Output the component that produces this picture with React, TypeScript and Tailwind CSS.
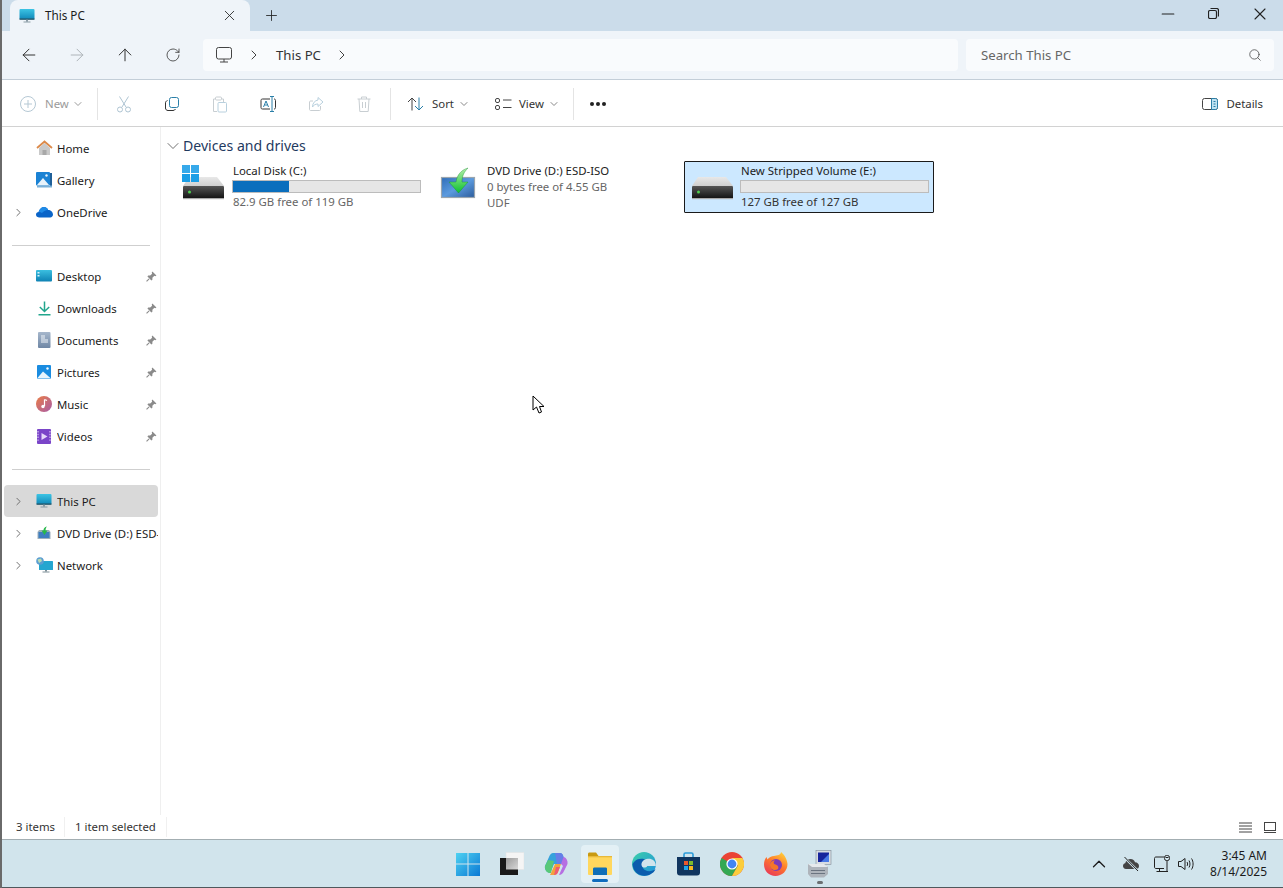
import {
  ArrowLeft,
  ArrowRight,
  ArrowUp,
  ChevronDown,
  ChevronRight,
  ChevronUp,
  Minus,
  Plus,
  RotateCw,
  Search,
  X,
} from "lucide-react";

function PcIcon({ size = 16 }: { size?: number }) {
  return (
    <svg width={size} height={size} viewBox="0 0 16 16">
      <defs>
        <linearGradient id="pcg" x1="0" y1="0" x2="0" y2="1">
          <stop offset="0" stopColor="#3cc4e4" />
          <stop offset="1" stopColor="#0f87b8" />
        </linearGradient>
      </defs>
      <rect x="0.5" y="1" width="15" height="10.5" rx="1" fill="url(#pcg)" />
      <rect x="0.5" y="10.5" width="15" height="1.2" fill="#27505f" />
      <rect x="7" y="11.7" width="2" height="2" fill="#8a9ba5" />
      <rect x="4.5" y="13.5" width="7" height="1" fill="#8a9ba5" />
    </svg>
  );
}

function HomeIcon() {
  return (
    <svg width="17" height="16" viewBox="0 0 17 16">
      <path d="M3 8 L8.5 3 L14 8 V15 H3 Z" fill="#c9c9c9" />
      <rect x="6.5" y="10" width="4" height="5" fill="#a8a8a8" />
      <path d="M1 8 L8.5 1.5 L16 8" fill="none" stroke="#dc8a4a" strokeWidth="1.8" />
    </svg>
  );
}

function GalleryIcon() {
  return (
    <svg width="16" height="16" viewBox="0 0 16 16">
      <rect x="0" y="0" width="14" height="13.5" rx="1" fill="#1a82d4" />
      <rect x="14" y="1" width="2" height="14" fill="#1f5f98" />
      <rect x="1" y="13.5" width="15" height="2" fill="#7ab0d8" />
      <path d="M1 13 L7 6 L13 13 Z" fill="#e8f3fb" />
      <circle cx="10.5" cy="3.5" r="1.2" fill="#e8f3fb" />
    </svg>
  );
}

function CloudIcon() {
  return (
    <svg width="17" height="12" viewBox="0 0 17 12">
      <path d="M3 11.5 C0.8 11.5 0 9.8 0 8.6 C0 7 1.2 6 2.6 6 C3.4 3 5.5 1 8 1 C10.2 1 11.5 2.4 12.2 4 C14.6 4 17 6 17 8.6 C17 10.3 15.8 11.5 14.2 11.5 Z" fill="#0a64c8" />
      <path d="M2.6 6 C3.4 3 5.5 1 8 1 C10.2 1 11.5 2.4 12.2 4 C9.6 4 7 5.5 6 7 C5 6.2 3.8 5.9 2.6 6 Z" fill="#1f8ae6" />
    </svg>
  );
}

function DesktopIcon() {
  return (
    <svg width="16" height="12" viewBox="0 0 16 12">
      <defs>
        <linearGradient id="dtg" x1="0" y1="0" x2="0" y2="1">
          <stop offset="0" stopColor="#3bbfe0" />
          <stop offset="1" stopColor="#0e82b4" />
        </linearGradient>
      </defs>
      <rect width="16" height="11.5" rx="1" fill="url(#dtg)" />
      <rect x="1.5" y="2" width="2" height="1.5" fill="#d8f2fa" />
      <rect x="1.5" y="5" width="2" height="1.5" fill="#d8f2fa" />
    </svg>
  );
}

function DownloadIcon() {
  return (
    <svg width="13" height="15" viewBox="0 0 13 15">
      <path d="M6.5 0.5 V10 M1.8 6 L6.5 10.5 L11.2 6" fill="none" stroke="#22a68d" strokeWidth="1.5" />
      <rect x="0.5" y="13" width="12" height="1.5" fill="#22a68d" />
    </svg>
  );
}

function DocumentIcon() {
  return (
    <svg width="13" height="16" viewBox="0 0 13 16">
      <defs>
        <linearGradient id="docg" x1="0" y1="0" x2="0" y2="1">
          <stop offset="0" stopColor="#a6b7cc" />
          <stop offset="1" stopColor="#6f87a5" />
        </linearGradient>
      </defs>
      <rect width="12.5" height="16" rx="1" fill="url(#docg)" />
      <path d="M3 4 H7 M3 6 H7 M3 8 H10 M3 10 H10" stroke="#f1f5f9" strokeWidth="1" />
    </svg>
  );
}

function PicturesIcon() {
  return (
    <svg width="14" height="14" viewBox="0 0 14 14">
      <rect width="14" height="14" rx="1" fill="#1a8ce0" />
      <path d="M0 13.5 L6 6.5 L14 13.5 Z" fill="#e8f4fc" />
      <circle cx="10.5" cy="3.5" r="1.2" fill="#f4fbff" />
    </svg>
  );
}

function MusicIcon() {
  return (
    <svg width="16" height="16" viewBox="0 0 16 16">
      <defs>
        <linearGradient id="musg" x1="0" y1="0" x2="1" y2="1">
          <stop offset="0" stopColor="#ea7d45" />
          <stop offset="1" stopColor="#a85ca8" />
        </linearGradient>
      </defs>
      <circle cx="8" cy="8" r="8" fill="url(#musg)" />
      <path d="M8.5 3.5 V10 M8.5 3.5 L11 4.5" stroke="#fff" strokeWidth="1.2" fill="none" />
      <circle cx="7" cy="10.5" r="1.7" fill="#fff" />
    </svg>
  );
}

function VideosIcon() {
  return (
    <svg width="14" height="15" viewBox="0 0 14 15">
      <rect width="14" height="15" rx="1" fill="#7a45c8" />
      <path d="M4.5 4 L10.5 7.5 L4.5 11 Z" fill="#e6d8fa" />
      <path d="M1 2 V13 M13 2 V13" stroke="#d7c3f5" strokeWidth="1.2" strokeDasharray="1.4 1.4" />
    </svg>
  );
}

function DvdSmallIcon() {
  return (
    <svg width="14" height="14" viewBox="0 0 14 14">
      <path d="M2 4 H12 L13.5 6 V13 H0.5 V6 Z" fill="#9fb0bd" />
      <rect x="1.5" y="6" width="11" height="6" fill="#3f7ec0" />
      <path d="M10 0.5 C7.5 1 6.5 2.5 6.5 4.5 H4.5 L7.5 9 L10.5 4.5 H8.5 C8.5 3 9 1.5 10 0.5 Z" fill="#27b84a" />
    </svg>
  );
}

function NetworkIcon() {
  return (
    <svg width="17" height="16" viewBox="0 0 17 16">
      <rect x="3" y="4" width="14" height="9" rx="0.6" fill="#25a6d0" />
      <rect x="9" y="13" width="2" height="1.5" fill="#7d8d96" />
      <rect x="6.5" y="14.5" width="7" height="1" fill="#7d8d96" />
      <circle cx="4" cy="4" r="3.8" fill="#5c9ed2" />
      <path d="M1.5 2.5 L5 1.5 L6 4 L3 6 Z" fill="#b9dbb3" />
    </svg>
  );
}

function PinIcon() {
  return (
    <svg width="11" height="11" viewBox="0 0 10 10">
      <path d="M5.8 0.5 L9.5 4.2 L8.4 4.8 L7.6 4.4 L5.8 6.2 L5.8 8 L4.9 8.7 L1.3 5.1 L2 4.2 L3.8 4.2 L5.6 2.4 L5.2 1.6 Z" fill="#8a8a8a" />
      <path d="M2.8 7.2 L0.5 9.5" stroke="#8a8a8a" strokeWidth="1" />
    </svg>
  );
}

function DriveBody({ logo }: { logo?: boolean }) {
  return (
    <svg width="48" height="48" viewBox="0 0 48 48">
      <defs>
        <linearGradient id="hddtop" x1="0" y1="0" x2="0" y2="1">
          <stop offset="0" stopColor="#e8e8e8" />
          <stop offset="1" stopColor="#cfcfcf" />
        </linearGradient>
        <linearGradient id="hddbody" x1="0" y1="0" x2="0" y2="1">
          <stop offset="0" stopColor="#555" />
          <stop offset="1" stopColor="#101010" />
        </linearGradient>
      </defs>
      <g transform={logo ? "translate(-1 0)" : undefined}>
        <path d="M9 14 H37 L44 23 H3 Z" fill="url(#hddtop)" />
        <rect x="3" y="23" width="41" height="13" rx="1" fill="url(#hddbody)" />
        <rect x="3" y="35" width="41" height="1.2" fill="#a9a9a9" />
        <circle cx="9.5" cy="29" r="1.5" fill="#4fd04f" />
      </g>
      {logo && (
        <g fill="#1b9ee6">
          <rect x="1" y="2" width="8" height="8" fill="#36a9ea" />
          <rect x="10" y="2" width="8" height="8" fill="#36a9ea" />
          <rect x="1" y="11" width="8" height="8" />
          <rect x="10" y="11" width="8" height="8" />
        </g>
      )}
    </svg>
  );
}

function DvdIcon() {
  return (
    <svg width="48" height="48" viewBox="0 0 48 48">
      <defs>
        <linearGradient id="dvdbody" x1="0" y1="0" x2="1" y2="1">
          <stop offset="0" stopColor="#2f6db8" />
          <stop offset="0.5" stopColor="#5b9ade" />
          <stop offset="1" stopColor="#2c5c9c" />
        </linearGradient>
        <linearGradient id="dvdarrow" x1="0" y1="0" x2="0" y2="1">
          <stop offset="0" stopColor="#b4f0a8" />
          <stop offset="1" stopColor="#0cc030" />
        </linearGradient>
      </defs>
      <rect x="6.5" y="14.5" width="33" height="20" fill="url(#dvdbody)" stroke="#9aa5ae" strokeWidth="1.2" />
      <path d="M33 5 C26 7 22 12 21 19 H14 L23.5 30 L33 19 H27 C27 13 29 9 33 5 Z" fill="url(#dvdarrow)" stroke="#128a2c" strokeWidth="0.4" />
    </svg>
  );
}

function CopyIcon() {
  return (
    <svg width="16" height="16" viewBox="0 0 16 16" fill="none">
      <rect x="5.5" y="1.5" width="9" height="10" rx="2" stroke="#2a7fa8" />
      <path d="M3.5 4.5 C2 5 1.5 6 1.5 7 V12 C1.5 13.5 2.5 14.5 4 14.5 H9 C10 14.5 11 14 11.5 13" stroke="#333" />
    </svg>
  );
}

function CutIcon() {
  return (
    <svg width="16" height="17" viewBox="0 0 16 17" fill="none" stroke="#aec4d2">
      <path d="M3.5 0.5 L10 11 M12.5 0.5 L6 11" />
      <circle cx="4" cy="13.5" r="2.5" />
      <circle cx="12" cy="13.5" r="2.5" />
    </svg>
  );
}

function PasteIcon() {
  return (
    <svg width="16" height="17" viewBox="0 0 16 17" fill="none">
      <path d="M3 3 H1.5 V15.5 H5 M10 3 H11.5 V6" stroke="#c8ced2" />
      <rect x="3.5" y="1" width="6" height="3" rx="1" stroke="#c8ced2" />
      <rect x="6" y="6.5" width="8.5" height="9.5" rx="1" stroke="#b8d0de" />
    </svg>
  );
}

function RenameIcon() {
  return (
    <svg width="17" height="16" viewBox="0 0 17 16" fill="none">
      <path d="M10 3 H2.5 C1.5 3 1 3.5 1 4.5 V11.5 C1 12.5 1.5 13 2.5 13 H10" stroke="#333" />
      <path d="M14 3 C15 3 15.5 3.5 15.5 4.5 V11.5 C15.5 12.5 15 13 14 13" stroke="#333" />
      <path d="M12 0.5 V15.5 M10 0.5 H14 M10 15.5 H14" stroke="#2a7fa8" />
      <path d="M3.5 11 L6 5 L8.5 11 M4.5 9 H7.5" stroke="#2a7fa8" />
    </svg>
  );
}

function ShareIcon() {
  return (
    <svg width="16" height="16" viewBox="0 0 16 16" fill="none">
      <path d="M12.5 10 V13.5 C12.5 14.3 12 14.5 11.5 14.5 H2.5 C2 14.5 1.5 14 1.5 13.5 V6 C1.5 5.5 2 5 2.5 5 H5" stroke="#c8ced2" />
      <path d="M10 1.5 L15 6 L10 10.5 V8 C7.5 8 5.5 9 4.5 11 C4.5 7 7 4.5 10 4 Z" stroke="#b8d0de" />
    </svg>
  );
}

function TrashIcon() {
  return (
    <svg width="14" height="16" viewBox="0 0 14 16" fill="none" stroke="#c8ced2">
      <path d="M0.5 3 H13.5 M4.5 3 V1 H9.5 V3 M2 3 L2.8 15.5 H11.2 L12 3 M5.5 6 V12 M8.5 6 V12" />
    </svg>
  );
}

function SortIcon() {
  return (
    <svg width="17" height="14" viewBox="0 0 17 14" fill="none">
      <path d="M5 13.5 V1 M1 5 L5 1 L9 5" stroke="#444" />
      <path d="M12 0.5 V13 M8 9 L12 13 L16 9" stroke="#2a7fa8" />
    </svg>
  );
}

function ViewIcon() {
  return (
    <svg width="17" height="12" viewBox="0 0 17 12" fill="none" stroke="#444">
      <rect x="0.5" y="0.5" width="4" height="4" rx="1.5" />
      <rect x="0.5" y="7.5" width="4" height="4" rx="1.5" />
      <path d="M8 2 H16.5 M8 9.5 H16.5" />
    </svg>
  );
}

function DetailsIcon() {
  return (
    <svg width="16" height="12" viewBox="0 0 16 12" fill="none">
      <rect x="0.5" y="0.5" width="15" height="11" rx="2" stroke="#444" />
      <path d="M9.5 0.5 H13.5 C14.6 0.5 15.5 1.4 15.5 2.5 V9.5 C15.5 10.6 14.6 11.5 13.5 11.5 H9.5 Z" fill="#bfe3f2" stroke="#2a7fa8" />
      <path d="M11.5 3.5 H13.5 M11.5 6 H13.5 M11.5 8.5 H13.5" stroke="#2a7fa8" />
    </svg>
  );
}

function MonitorOutline() {
  return (
    <svg width="16" height="16" viewBox="0 0 16 16" fill="none" stroke="#444">
      <rect x="0.5" y="0.5" width="15" height="11.5" rx="2" />
      <path d="M8 12 V15 M4 15 H12" />
    </svg>
  );
}

function RestoreIcon() {
  return (
    <svg width="11" height="11" viewBox="0 0 11 11" fill="none" stroke="#222">
      <rect x="0.5" y="2.5" width="8" height="8" rx="1.5" strokeWidth="1.2" />
      <path d="M2.5 0.5 H8.5 C9.6 0.5 10.5 1.4 10.5 2.5 V8.5" strokeWidth="1.2" />
    </svg>
  );
}

function StartIcon() {
  return (
    <svg width="24" height="24" viewBox="0 0 24 24">
      <defs>
        <linearGradient id="stg" x1="0" y1="0" x2="1" y2="1">
          <stop offset="0" stopColor="#4fd2f2" />
          <stop offset="1" stopColor="#0a78d4" />
        </linearGradient>
      </defs>
      <path d="M0 1 H11.5 V11.5 H0 Z M12.5 1 H24 V11.5 H12.5 Z M0 12.5 H11.5 V24 H0 Z M12.5 12.5 H24 V24 H12.5 Z" fill="url(#stg)" />
    </svg>
  );
}

function TaskViewIcon() {
  return (
    <svg width="24" height="24" viewBox="0 0 24 24">
      <defs>
        <linearGradient id="tvg" x1="0" y1="0" x2="1" y2="1">
          <stop offset="0" stopColor="#9a9a9a" />
          <stop offset="1" stopColor="#d8d8d8" />
        </linearGradient>
      </defs>
      <rect x="6" y="0.5" width="18" height="17" fill="#f5f5f5" stroke="#e2e2e2" strokeWidth="0.5" />
      <rect x="0" y="6" width="18" height="17" fill="#1a1a1a" />
      <rect x="6" y="6" width="12" height="11.5" fill="url(#tvg)" />
    </svg>
  );
}

function CopilotIcon() {
  return (
    <svg width="24" height="24" viewBox="0 0 24 24">
      <path d="M9 1 H16 C18 1 19 3 19.5 5 L17 12 H10 L6 21 C2 20 0.5 17 1 14 L5 5 C6 2.5 7.5 1 9 1 Z" fill="#35a2dc" />
      <path d="M4 8 L10 9 L7 21 H5 C2 20 0.5 17 1 14 Z" fill="#58c878" />
      <path d="M7 21 L11 12 H17 L14 20 C13.5 22 12 23 10 23 H6 Z" fill="#f2a23c" />
      <path d="M12 15 H16 L14 20 C13.5 22 12 23 10 23 Z" fill="#ee5a72" />
      <path d="M15 5 H20 C22.5 6 24 9 23.5 12 L20 19 C19 21.5 17 23 15 23 L19 14 L17 12 Z" fill="#b66fe2" />
      <path d="M11 1 H16 C18 1 19 3 19.5 5 L17 12 H13 Z" fill="#667ee8" />
    </svg>
  );
}

function FolderIcon() {
  return (
    <svg width="24" height="23" viewBox="0 0 24 23">
      <path d="M0 2 C0 1 0.5 0.5 1.5 0.5 H8 L10.5 4 H0 Z" fill="#c99a12" />
      <rect x="0" y="4" width="24" height="19" rx="1" fill="#ffd75e" />
      <rect x="0" y="4" width="24" height="1.3" fill="#e8b93a" />
      <path d="M5 17 C5 16 5.5 15.5 6.5 15.5 H17.5 C18.5 15.5 19 16 19 17 V23 H5 Z" fill="#0e6fb8" />
    </svg>
  );
}

function EdgeIcon() {
  return (
    <svg width="24" height="24" viewBox="0 0 24 24">
      <defs>
        <linearGradient id="edg" x1="0" y1="0" x2="1" y2="1">
          <stop offset="0" stopColor="#3cd0a8" />
          <stop offset="1" stopColor="#1f8fe0" />
        </linearGradient>
      </defs>
      <circle cx="12" cy="12" r="12" fill="url(#edg)" />
      <path d="M0.5 12 C1 23 12 25.5 18 22.5 C21 21 22.5 19.5 23.5 17 C20 20 13 20 11 16 C9 12 12 9 15 8.5 C12 6 6 6 3 9 C2 10 1 11 0.5 12 Z" fill="#0b5cad" />
      <path d="M23.8 13.5 C24 9 20 6.5 16 6.8 C11.5 7.2 8.5 10.5 9.8 14 C10.6 16 14 16 15 14.5 L15.2 14 H23.8 Z" fill="#d1e4ec" />
    </svg>
  );
}

function StoreIcon() {
  return (
    <svg width="23" height="24" viewBox="0 0 23 24">
      <path d="M7 5 V2.5 C7 1.5 7.5 1 8.5 1 H14.5 C15.5 1 16 1.5 16 2.5 V5" fill="none" stroke="#2b9bd8" strokeWidth="1.6" />
      <path d="M0 5 H23 V20.5 C23 22.5 22 23.5 20 23.5 H3 C1 23.5 0 22.5 0 20.5 Z" fill="#10355f" />
      <rect x="7" y="9" width="4" height="4" fill="#e9582b" />
      <rect x="12" y="9" width="4" height="4" fill="#7cbb2c" />
      <rect x="7" y="14" width="4" height="4" fill="#1fa4e8" />
      <rect x="12" y="14" width="4" height="4" fill="#f8b820" />
    </svg>
  );
}

function ChromeIcon() {
  return (
    <svg width="24" height="24" viewBox="0 0 24 24">
      <circle cx="12" cy="12" r="12" fill="#ea4335" />
      <path d="M12 12 L1.6 6 A12 12 0 0 0 12 24 L18 13.6 Z" fill="#34a853" />
      <path d="M12 6 H22.4 A12 12 0 0 1 12 24 L18 13.6 Z" fill="#fbcd3c" />
      <circle cx="12" cy="12" r="5.6" fill="#fff" />
      <circle cx="12" cy="12" r="4.4" fill="#4285f4" />
    </svg>
  );
}

function FirefoxIcon() {
  return (
    <svg width="24" height="24" viewBox="0 0 24 24">
      <defs>
        <linearGradient id="ffg" x1="0.8" y1="0" x2="0.2" y2="1">
          <stop offset="0" stopColor="#ffd23a" />
          <stop offset="0.45" stopColor="#ff7a2a" />
          <stop offset="1" stopColor="#e8355a" />
        </linearGradient>
      </defs>
      <path d="M17 0 C19 1.5 23 6 23.5 12 C23.5 19 18 24 11.5 24 C5 24 0 19 0 12.5 C0 9.5 1 6.5 2.5 5 L3.5 7.5 C5 5.5 7.5 4 10 4 C13 3.5 17 3 17 0 Z" fill="url(#ffg)" />
      <circle cx="12" cy="13" r="6" fill="#7d3bb8" />
      <path d="M6 13 C6 10 8.5 8.5 11 8.5 C9 10 9.5 12 11.5 12.5 C14 13 15 15 14 17 C11 19.5 6 17.5 6 13 Z" fill="#f5762a" />
    </svg>
  );
}

function PrintMgmtIcon() {
  return (
    <svg width="24" height="28" viewBox="0 0 24 28">
      <rect x="8" y="0.5" width="15" height="14" fill="#d8dde2" stroke="#7f8b98" strokeWidth="0.6" />
      <path d="M10 2.5 H21 V12 H10 Z" fill="#17249c" />
      <path d="M13 12 L21 4 V12 Z" fill="#4a7ae6" />
      <path d="M0 14 H16 L20 17 V24 L16 27.5 H3 L0 24 Z" fill="#aeb4bb" />
      <path d="M0 14 H16 L20 17 H4 Z" fill="#e6e9ec" />
      <rect x="3" y="20" width="14" height="1" fill="#6b7480" />
      <rect x="3" y="23" width="14" height="1" fill="#6b7480" />
    </svg>
  );
}

function TrayCloud() {
  return (
    <svg width="18" height="16" viewBox="0 0 18 16" fill="none">
      <path d="M4 13 C2 13 1 11.5 1 10 C1 8.5 2 7.5 3.2 7.3 C3.8 4.5 6 3 8.5 3 C11 3 12.5 4.5 13 6.2 C15.5 6.2 17 8 17 10 C17 11.8 15.8 13 14 13 Z" fill="#444" />
      <path d="M2 1 L16 15" stroke="#d0e4ec" strokeWidth="2.4" />
      <path d="M2.5 1 L16 15" stroke="#222" strokeWidth="1" />
    </svg>
  );
}

function TrayNetwork() {
  return (
    <svg width="17" height="18" viewBox="0 0 17 18" fill="none" stroke="#222">
      <path d="M10 2 H2 C1 2 0.5 2.5 0.5 3.5 V12 C0.5 13 1 13.5 2 13.5 H10 M5.5 13.5 V16.5 M2.5 16.5 H9" />
      <rect x="10.5" y="0.5" width="5" height="5" rx="2" />
      <path d="M13 5.5 V16 M8 16.5 H14" />
      <path d="M11.5 2.5 H14.5" />
    </svg>
  );
}

function TraySpeaker() {
  return (
    <svg width="17" height="14" viewBox="0 0 17 14" fill="none" stroke="#222">
      <path d="M0.5 4.5 H3 L7 1.5 V12.5 L3 9.5 H0.5 Z" />
      <path d="M9 5 C9.8 6 9.8 8 9 9 M11 3.5 C12.3 5.5 12.3 8.5 11 10.5 M13.5 1.5 C15.6 4.5 15.6 9.5 13.5 12.5" />
    </svg>
  );
}

function NavRow({
  icon,
  label,
  chevron,
  pinned,
  active,
}: {
  icon: React.ReactNode;
  label: string;
  chevron?: boolean;
  pinned?: boolean;
  active?: boolean;
}) {
  return (
    <div className={["flex h-8 items-center rounded-sm pl-[8px]", active ? "bg-[#d9d9d9]" : ""].join(" ")}>
      <div className="flex w-5 items-center text-[#666]">
        {chevron && <ChevronRight size={13} strokeWidth={1.7} />}
      </div>
      <div className="flex w-6 shrink-0 items-center justify-center">{icon}</div>
      <span className="ml-[1px] flex-1 overflow-hidden whitespace-nowrap pt-[1px] text-[11.4px] text-[#1b1b1b]">{label}</span>
      {pinned && (
        <div className="mr-[1px] flex w-[12px] items-center justify-center">
          <PinIcon />
        </div>
      )}
    </div>
  );
}

function DriveTile({
  icon,
  name,
  bar,
  free,
  extra,
  selected,
}: {
  icon: React.ReactNode;
  name: string;
  bar?: number;
  free: string;
  extra?: string;
  selected?: boolean;
}) {
  return (
    <div
      className={[
        "flex h-[52px] w-[250px] rounded-[1px] border",
        selected ? "border-[#1a1a1a] bg-[#cce8ff]" : "border-transparent",
      ].join(" ")}
    >
      <div className="w-[56px] shrink-0 pl-[4px] pt-[1px]">{icon}</div>
      <div className="flex-1 pr-1 text-[11.4px] leading-[18px]">
        <div className="text-[#1b1b1b]">{name}</div>
        {bar !== undefined ? (
          <>
            <div className="-ml-[1px] h-[13px] border border-[#bcbcbc] bg-[#e6e6e6]">
              <div className="h-full bg-[#0a6ebd]" style={{ width: `${bar}%` }} />
            </div>
            <div className={selected ? "text-[#333]" : "text-[#666]"}>{free}</div>
          </>
        ) : (
          <div className="-mt-[1px] leading-[16px] text-[#666]">
            <div>{free}</div>
            <div>{extra}</div>
          </div>
        )}
      </div>
    </div>
  );
}

function ToolButton({ children }: { children: React.ReactNode }) {
  return <div className="flex h-full w-12 items-center justify-center">{children}</div>;
}

function TaskIcon({
  children,
  active,
  running,
}: {
  children: React.ReactNode;
  active?: boolean;
  running?: boolean;
}) {
  return (
    <div className="relative flex h-[38px] w-[38px] items-center justify-center">
      {active && <div className="absolute inset-0 rounded bg-[#e3f0f5]" />}
      <div className="relative">{children}</div>
      {active && <div className="absolute bottom-[1px] left-[11px] h-[3px] w-[16px] rounded-full bg-[#0f6cbd]" />}
      {running && <div className="absolute -bottom-[1px] left-[16px] h-[3px] w-[6px] rounded-full bg-[#6b6f72]" />}
    </div>
  );
}

export default function App() {
  return (
    <div className="relative flex h-[888px] w-[1283px] flex-col overflow-hidden border-l-2 border-[#6a6a6a] bg-white font-['Noto_Sans','Open_Sans',sans-serif]">
      {/* tab strip */}
      <div className="flex h-[31px] shrink-0 bg-[#cbdcea]">
        <div className="ml-2 flex w-[240px] items-center rounded-t-lg bg-[#eff4f9] pl-[9px] pr-[12px]">
          <PcIcon />
          <span className="ml-[10px] flex-1 text-[11.7px] text-[#1b1b1b]">This PC</span>
          <X size={17} strokeWidth={1.2} className="text-[#222]" />
        </div>
        <div className="ml-[13px] flex items-center">
          <Plus size={17} strokeWidth={1.2} className="text-[#222]" />
        </div>
        <div className="ml-auto flex">
          <div className="mr-[33px] flex h-[27px] w-[14px] items-center justify-center">
            <Minus size={20} strokeWidth={1.3} className="shrink-0 text-[#222]" />
          </div>
          <div className="mr-[34px] flex h-[27px] w-[11px] items-center justify-center">
            <RestoreIcon />
          </div>
          <div className="mr-[16px] flex h-[27px] w-[14px] items-center justify-center">
            <X size={20} strokeWidth={1.3} className="shrink-0 text-[#222]" />
          </div>
        </div>
      </div>

      {/* address row */}
      <div className="flex h-[49px] shrink-0 items-center border-b border-[#c3ced8] bg-[#eff4f9] pl-[3px] pr-[9px]">
        <ToolButton>
          <ArrowLeft size={20} strokeWidth={1.2} className="text-[#333]" />
        </ToolButton>
        <ToolButton>
          <ArrowRight size={20} strokeWidth={1.2} className="text-[#aeb4b9]" />
        </ToolButton>
        <ToolButton>
          <ArrowUp size={20} strokeWidth={1.2} className="text-[#333]" />
        </ToolButton>
        <ToolButton>
          <RotateCw size={16} strokeWidth={1.2} className="text-[#333]" />
        </ToolButton>
        <div className="ml-[6px] flex h-8 w-[755px] items-center rounded bg-[#f9fbfd] pl-[13px] text-[13.2px] text-[#333]">
          <MonitorOutline />
          <ChevronRight size={16} strokeWidth={1.4} className="ml-[14px] text-[#333]" />
          <span className="ml-[14px] pt-[1px]">This PC</span>
          <ChevronRight size={16} strokeWidth={1.4} className="ml-[13px] text-[#333]" />
        </div>
        <div className="ml-2 flex h-8 flex-1 items-center justify-between rounded bg-[#f9fbfd] pl-[15px] pr-[12px] text-[13.2px] text-[#666]">
          <span className="pt-[1px]">Search This PC</span>
          <Search size={14} strokeWidth={1.3} className="text-[#444]" />
        </div>
      </div>

      {/* command bar */}
      <div className="flex h-[47px] shrink-0 items-center border-b border-[#d2d2d2] pl-[18px] pr-[18px] pt-[2px] text-[11.4px] text-[#333]">
        <div className="flex w-[60px] items-center text-[#9a9a9a]">
          <svg width="16" height="16" viewBox="0 0 16 16" fill="none" stroke="#b5c8d4" className="shrink-0">
            <circle cx="8" cy="8" r="7.5" />
            <path d="M8 4 V12 M4 8 H12" />
          </svg>
          <span className="ml-[9px]">New</span>
          <ChevronDown size={12} className="ml-[3px] shrink-0" />
        </div>
        <div className="ml-[17px] h-8 w-px bg-[#e4e4e4]" />
        <div className="ml-[2px] flex h-full">
          <ToolButton><CutIcon /></ToolButton>
          <ToolButton><CopyIcon /></ToolButton>
          <ToolButton><PasteIcon /></ToolButton>
          <ToolButton><RenameIcon /></ToolButton>
          <ToolButton><ShareIcon /></ToolButton>
          <ToolButton><TrashIcon /></ToolButton>
        </div>
        <div className="ml-[2px] h-8 w-px bg-[#e4e4e4]" />
        <div className="ml-[16px] flex items-center">
          <SortIcon />
          <span className="ml-[8px]">Sort</span>
          <ChevronDown size={12} className="ml-[4px] text-[#888]" />
        </div>
        <div className="ml-[25px] flex items-center">
          <ViewIcon />
          <span className="ml-[7px]">View</span>
          <ChevronDown size={12} className="ml-[4px] text-[#888]" />
        </div>
        <div className="ml-[13px] h-8 w-px bg-[#e4e4e4]" />
        <div className="ml-[16px] flex gap-[2px]">
          <span className="h-1 w-1 rounded-full bg-[#222]" />
          <span className="h-1 w-1 rounded-full bg-[#222]" />
          <span className="h-1 w-1 rounded-full bg-[#222]" />
        </div>
        <div className="ml-auto flex items-center pr-[2px]">
          <DetailsIcon />
          <span className="ml-[8px]">Details</span>
        </div>
      </div>

      {/* body */}
      <div className="flex min-h-0 flex-1">
        <div className="w-[159px] shrink-0 border-r border-[#efefef] pl-[2px] pr-[2px] pt-[5px]">
          <NavRow icon={<HomeIcon />} label="Home" />
          <NavRow icon={<GalleryIcon />} label="Gallery" />
          <NavRow icon={<CloudIcon />} label="OneDrive" chevron />
          <div className="mx-[8px] mb-[14px] mt-[17px] h-px w-[138px] bg-[#cfcfcf]" />
          <NavRow icon={<DesktopIcon />} label="Desktop" pinned />
          <NavRow icon={<DownloadIcon />} label="Downloads" pinned />
          <NavRow icon={<DocumentIcon />} label="Documents" pinned />
          <NavRow icon={<PicturesIcon />} label="Pictures" pinned />
          <NavRow icon={<MusicIcon />} label="Music" pinned />
          <NavRow icon={<VideosIcon />} label="Videos" pinned />
          <div className="mx-[8px] mb-[15px] mt-[17px] h-px w-[138px] bg-[#cfcfcf]" />
          <NavRow icon={<PcIcon />} label="This PC" chevron active />
          <NavRow icon={<DvdSmallIcon />} label="DVD Drive (D:) ESD-" chevron />
          <NavRow icon={<NetworkIcon />} label="Network" chevron />
        </div>
        <div className="flex-1 pl-[8px] pt-[9px]">
          <div className="flex h-5 items-center text-[14.1px] text-[#1f3a5f]">
            <ChevronDown size={20} strokeWidth={1} className="-ml-[6px] shrink-0 text-[#555]" />
            <span className="">Devices and drives</span>
          </div>
          <div className="ml-[7px] mt-[5px] flex gap-1">
            <DriveTile icon={<DriveBody logo />} name="Local Disk (C:)" bar={30} free="82.9 GB free of 119 GB" />
            <DriveTile icon={<DvdIcon />} name="DVD Drive (D:) ESD-ISO" free="0 bytes free of 4.55 GB" extra="UDF" />
            <DriveTile icon={<DriveBody />} name="New Stripped Volume (E:)" bar={0} free="127 GB free of 127 GB" selected />
          </div>
        </div>
      </div>

      {/* status bar */}
      <div className="flex h-[24px] shrink-0 items-center pl-[14px] pr-[7px] text-[11.4px] text-[#333]">
        <span>3 items</span>
        <span className="ml-[9px] h-5 w-px bg-[#f0f0f0]" />
        <span className="ml-[10px]">1 item selected</span>
        <span className="ml-[10px] h-5 w-px bg-[#f0f0f0]" />
        <div className="ml-auto flex items-center gap-[12px]">
          <svg width="13" height="11" viewBox="0 0 13 11" stroke="#444">
            <path d="M0 1 H13 M0 4 H13 M0 7 H13 M0 10 H13" />
          </svg>
          <svg width="12" height="11" viewBox="0 0 12 11" fill="none" stroke="#444">
            <rect x="0.5" y="0.5" width="11" height="8" />
            <path d="M0 10.5 H12" />
          </svg>
        </div>
      </div>

      {/* taskbar */}
      <div className="relative flex h-[49px] shrink-0 items-center justify-center border-b border-t border-b-[#4f585c] border-t-[#a3aeb2] bg-[#d1e4ec]">
        <div className="absolute left-[447px] flex h-full items-center gap-[6px]">
          <TaskIcon><StartIcon /></TaskIcon>
          <TaskIcon><TaskViewIcon /></TaskIcon>
          <TaskIcon><CopilotIcon /></TaskIcon>
          <TaskIcon active><FolderIcon /></TaskIcon>
          <TaskIcon><EdgeIcon /></TaskIcon>
          <TaskIcon><StoreIcon /></TaskIcon>
          <TaskIcon><ChromeIcon /></TaskIcon>
          <TaskIcon><FirefoxIcon /></TaskIcon>
          <TaskIcon running><PrintMgmtIcon /></TaskIcon>
        </div>
        <div className="absolute right-[16px] flex h-full items-center text-[#1b1b1b]">
          <ChevronUp size={22} strokeWidth={1.4} />
          <div className="ml-[12px]"><TrayCloud /></div>
          <div className="ml-[14px]"><TrayNetwork /></div>
          <div className="ml-[7px]"><TraySpeaker /></div>
          <div className="ml-[15px] text-right text-[12px] leading-[16px]">
            <div>3:45 AM</div>
            <div>8/14/2025</div>
          </div>
        </div>
      </div>

      {/* mouse pointer */}
      <svg className="absolute left-[530px] top-[395px]" width="13" height="20" viewBox="0 0 13 20">
        <path d="M1 1 V15 L4.5 12 L7 18 L9.5 17 L7.5 11.5 H12 Z" fill="#fff" stroke="#000" strokeWidth="1" />
      </svg>
    </div>
  );
}
